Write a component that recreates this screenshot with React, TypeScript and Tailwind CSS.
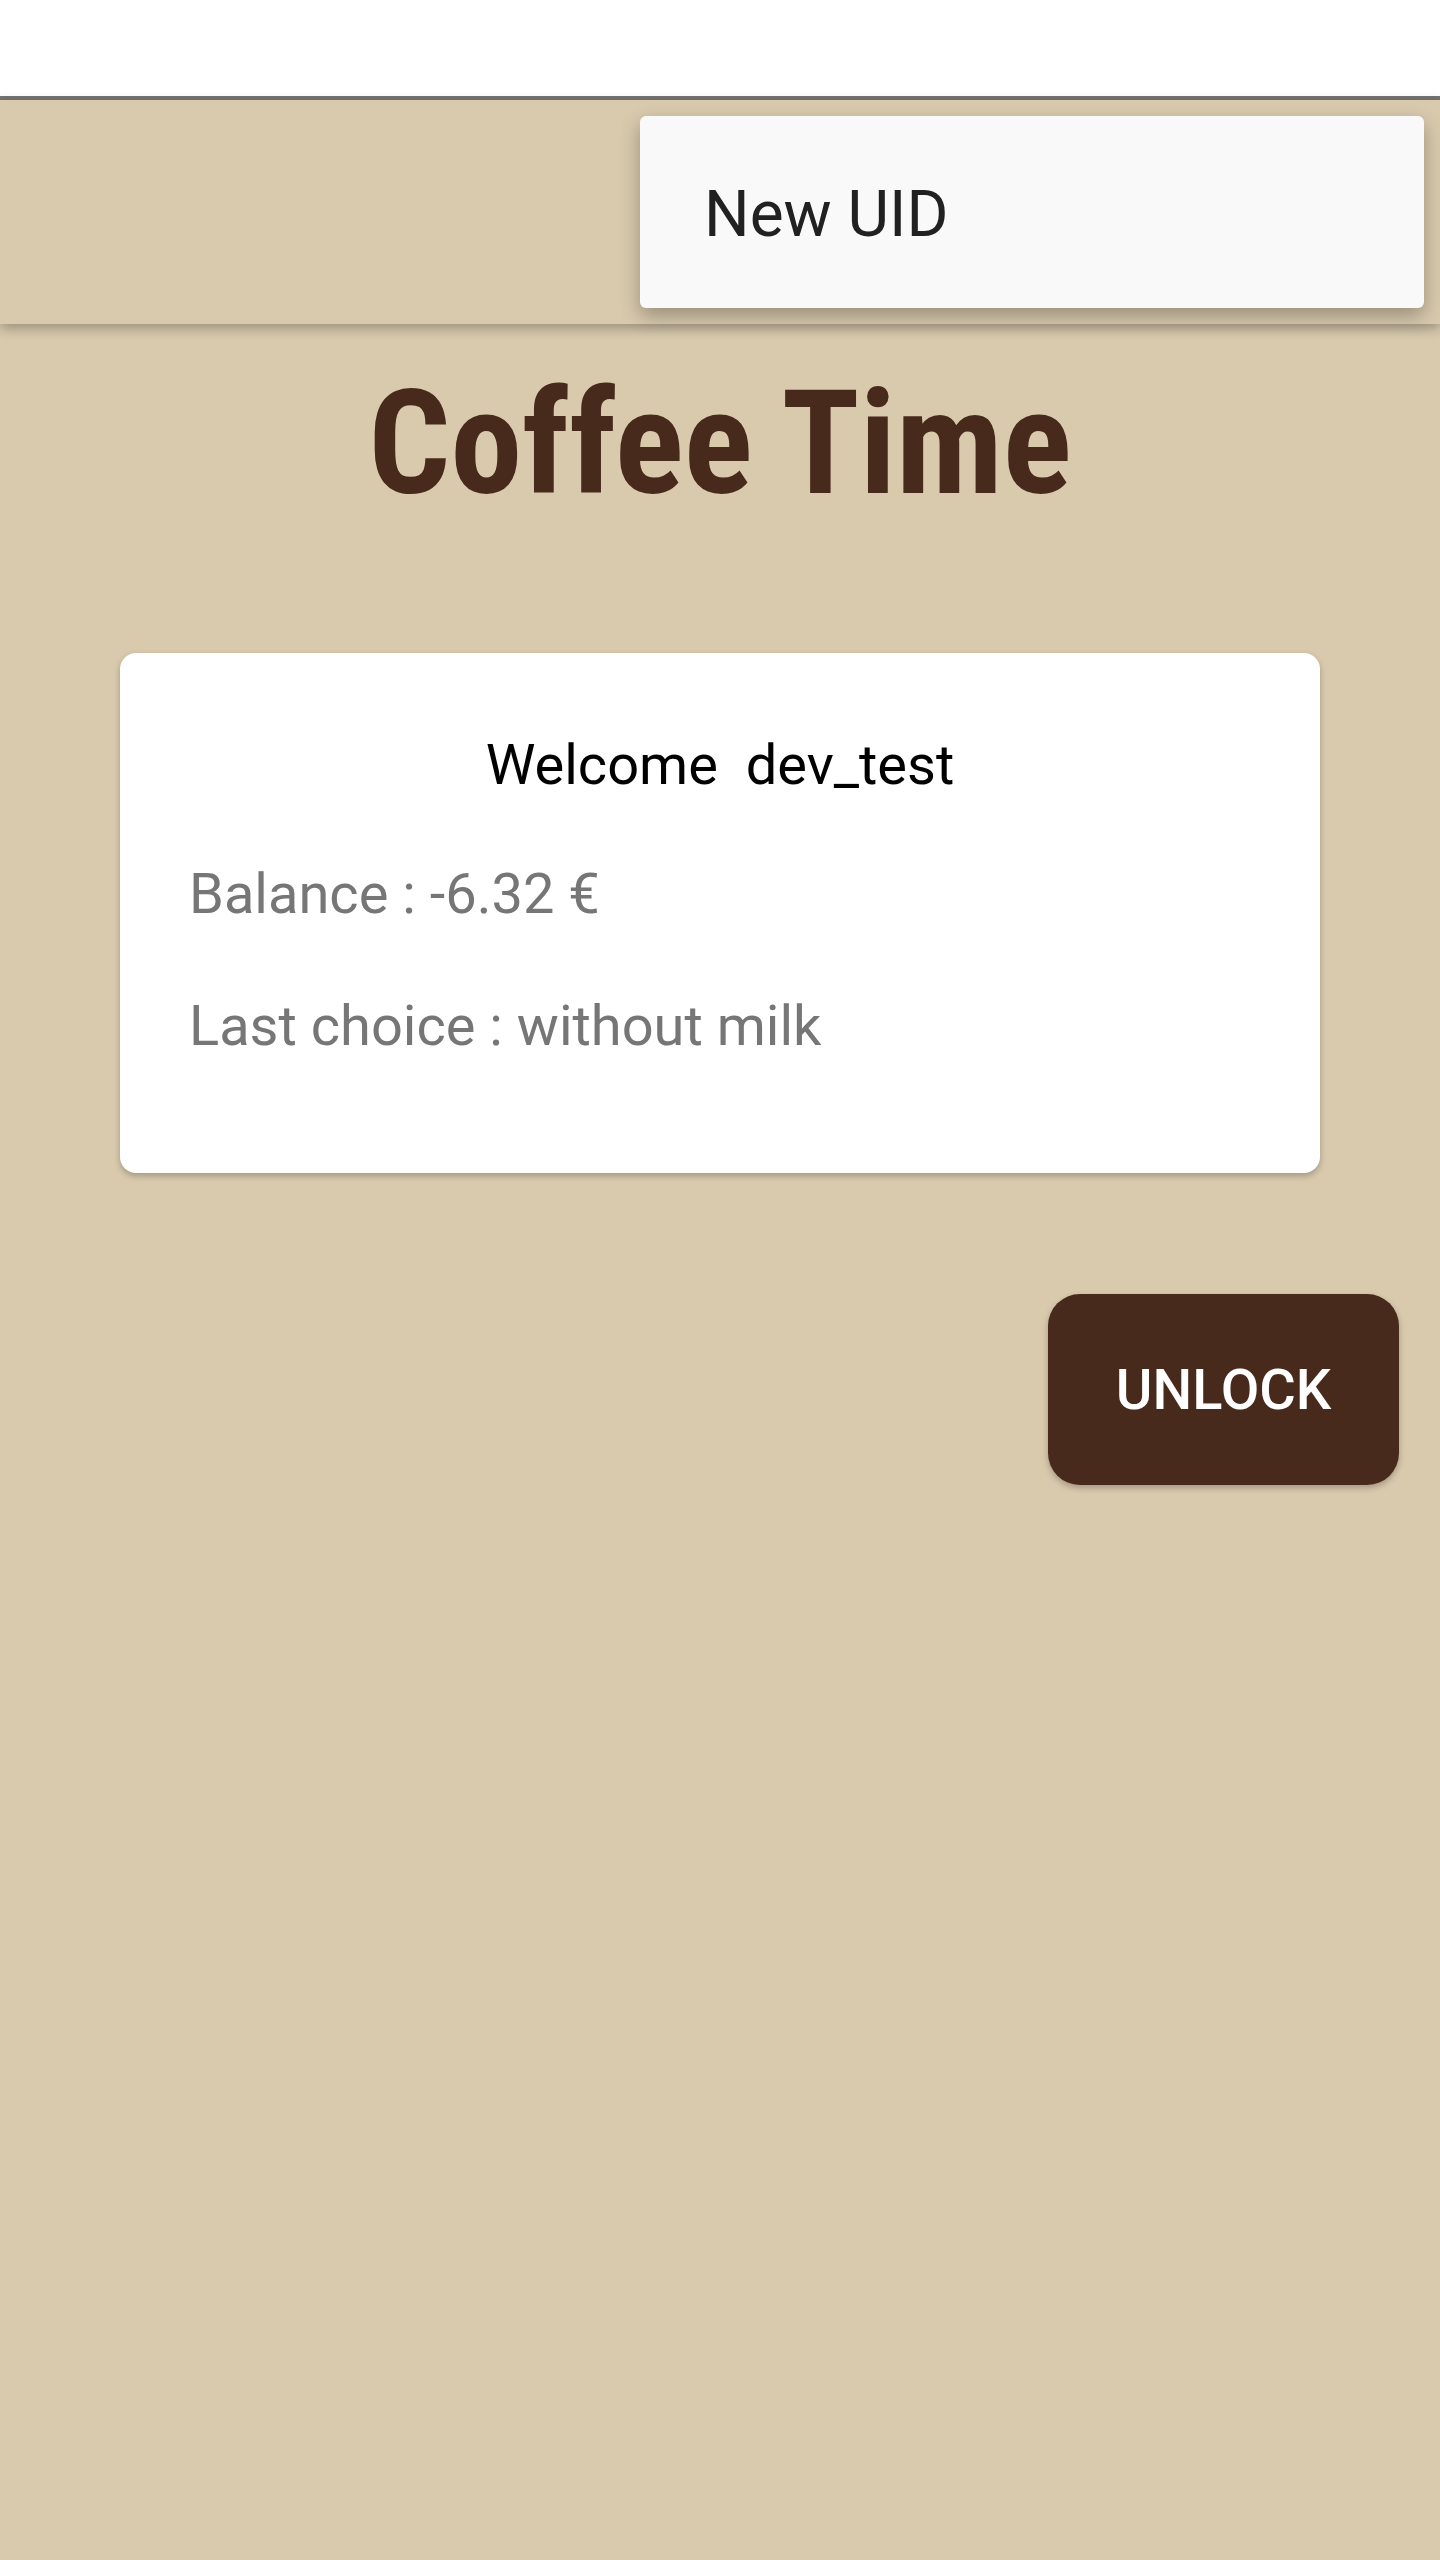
import React from "react";

const roboto = { fontFamily: "Roboto, 'Noto Sans', sans-serif" };

export default function App() {
  return (
    <div className="min-h-[2560px] bg-[#d9caae] flex flex-col" style={roboto}>
      {/* status area */}
      <div className="h-[96px] bg-white border-b-4 border-[#757575] box-content" />

      {/* app bar */}
      <div className="relative z-10 h-[224px] bg-[#d9caae] shadow-[0_4px_12px_rgba(0,0,0,0.3)]">
        <div className="absolute left-[640px] top-[16px] w-[784px] h-[192px] bg-[#f9f9f9] rounded-[6px] shadow-[0_8px_20px_rgba(0,0,0,0.3)] flex items-center pl-[64px] pt-[6px]">
          <span className="text-[64px] text-[#212121] leading-none">New UID</span>
        </div>
      </div>

      <main className="flex flex-col">
        <h1
          className="mt-[48px] text-center text-[144px] font-bold leading-none text-[#482a1c]"
          style={{ fontFamily: "'Roboto Condensed', Roboto, sans-serif", fontStretch: "condensed" }}
        >
          Coffee Time
        </h1>

        <div className="mx-[120px] mt-[137px] h-[520px] bg-white rounded-[16px] shadow-[0_3px_6px_rgba(0,0,0,0.25)] px-[69px] pt-[84px]">
          <p className="text-center text-[56px] text-black leading-none whitespace-pre">Welcome  dev_test</p>
          <p className="mt-[73px] text-[56px] text-[#767676] leading-none">Balance : -6.32 €</p>
          <p className="mt-[76px] text-[56px] text-[#767676] leading-none">Last choice : without milk</p>
        </div>

        <div className="flex justify-end pr-[41px] mt-[121px]">
          <button className="w-[351px] h-[191px] rounded-[32px] bg-[#482a1c] text-white text-[56px] font-medium shadow-[0_3px_6px_rgba(0,0,0,0.25)]">
            UNLOCK
          </button>
        </div>
      </main>
    </div>
  );
}
